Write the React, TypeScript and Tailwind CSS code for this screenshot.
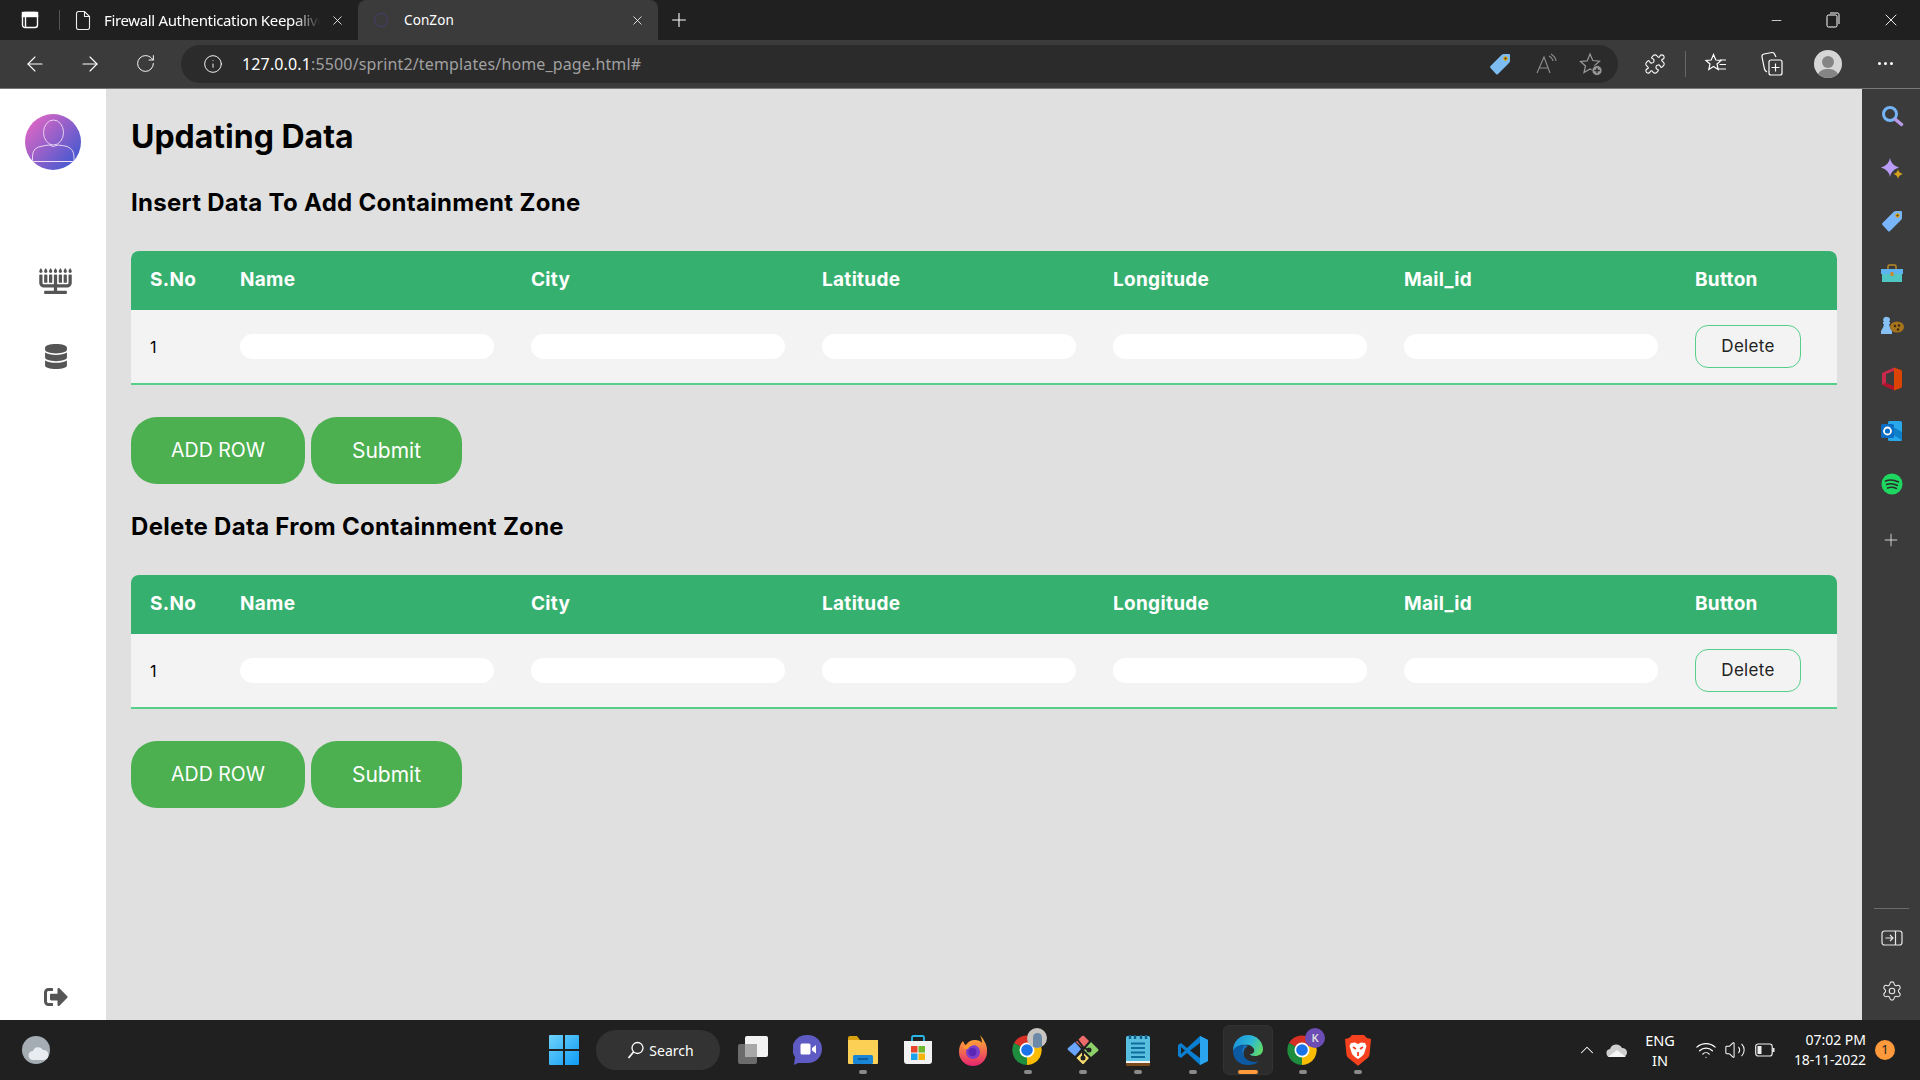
import React from "react";
import { FaMenorah, FaDatabase, FaSignOutAlt } from "react-icons/fa";
import {
  ArrowLeft, ArrowRight, RotateCw, Info, Plus, X, Minus, Puzzle, Settings, ChevronUp, Wifi, Volume2,
} from "lucide-react";

const ui = "font-['Noto_Sans','Open_Sans',sans-serif]";
const pop = "font-['Inter','Noto_Sans',sans-serif]";
const gridCols = "grid grid-cols-[90px_291px_291px_291px_291px_291px_1fr] pl-[19px] items-center";
const cols = ["S.No", "Name", "City", "Latitude", "Longitude", "Mail_id", "Button"];

function Field() {
  return <div className="w-[254px] h-[25px] rounded-full bg-white" />;
}

function DataBlock({ title, mt }: { title: string; mt: string }) {
  return (
    <section className={mt}>
      <h2 className={`${pop} text-[24px] leading-[36px] font-bold tracking-[0.3px] text-black`}>{title}</h2>
      <div className="mt-[30px]">
        <div className={`${gridCols} h-[59px] bg-[#36b06f] rounded-t-[8px] text-white text-[19px] font-bold tracking-[0.3px]`}>
          {cols.map((c) => (
            <div key={c}>{c}</div>
          ))}
        </div>
        <div className={`${gridCols} h-[75px] bg-[#f3f3f3] border-b-2 border-[#55cf8a] text-black`}>
          <div className="text-[16px]">1</div>
          <Field />
          <Field />
          <Field />
          <Field />
          <Field />
          <button className="w-[106px] h-[43px] rounded-[13px] border border-[#55cf8a] text-[17px] tracking-[0.3px] text-[#222]">Delete</button>
        </div>
      </div>
      <div className="flex gap-[6px] mt-[32px]">
        <button className="w-[174px] h-[67px] rounded-[26px] bg-[#4caf50] text-white text-[19.5px]">ADD ROW</button>
        <button className="w-[151px] h-[67px] rounded-[26px] bg-[#4caf50] text-white text-[21px]">Submit</button>
      </div>
    </section>
  );
}

function Tag({ c = "#7cbcf0" }: { c?: string }) {
  return (
    <svg width="24" height="24" viewBox="0 0 24 24">
      <path d="M2.5 14 L14 2.5 Q15 2 16 2 L21 2 Q22 2 22 3 L22 9 Q22 10 21 11 L10 22 Q9 23 8 22 L2.5 16 Q1.5 15 2.5 14Z" fill={c} />
      <circle cx="17.5" cy="6.5" r="2.2" fill="#e8a400" />
      <circle cx="17.5" cy="6.5" r="1" fill="#333" />
    </svg>
  );
}

function ToolBtn({ w, children }: { w: string; children: React.ReactNode }) {
  return <div className={`${w} flex items-center justify-center shrink-0`}>{children}</div>;
}

function TopBars() {
  return (
    <header className={`${ui} shrink-0`}>
      <div className="h-[40px] bg-[#202020] flex text-white">
        <div className="w-[60px] flex items-center justify-center relative shrink-0">
          <svg width="18" height="18" viewBox="0 0 18 18" fill="none" stroke="#fff" strokeWidth="1.4">
            <rect x="1.5" y="1.5" width="15" height="15" rx="2.5" />
            <rect x="1.5" y="1.5" width="15" height="4" fill="#fff" />
            <path d="M4.5 5.5v11" />
          </svg>
          <div className="absolute right-0 top-[10px] h-[20px] w-px bg-[#555]" />
        </div>
        <div className="w-[298px] flex items-center pl-[15px] shrink-0">
          <svg width="16" height="19" viewBox="0 0 16 19" fill="none" stroke="#eee" strokeWidth="1.1" className="shrink-0">
            <path d="M1.5 2.5a2 2 0 0 1 2-2h6l5 5v11a2 2 0 0 1-2 2h-9a2 2 0 0 1-2-2zM9.5.5v5h5" />
          </svg>
          <span className="ml-[13px] w-[216px] shrink-0 text-[15px] tracking-[-0.35px] whitespace-nowrap overflow-hidden [mask-image:linear-gradient(to_right,black_88%,transparent)]">
            Firewall Authentication Keepalive
          </span>
          <X size={15} strokeWidth={1.3} className="ml-[10px] shrink-0" />
        </div>
        <div className="w-[300px] bg-[#3b3b3b] rounded-t-[8px] flex items-center shrink-0">
          <div className="w-[46px] flex justify-center">
            <div className="w-[14px] h-[14px] rounded-full border border-[#4a3a70]" />
          </div>
          <span className="text-[13.5px] tracking-[0.1px]">ConZon</span>
          <X size={15} strokeWidth={1.3} className="ml-auto mr-[13px]" />
        </div>
        <div className="w-[42px] flex items-center justify-center">
          <Plus size={22} strokeWidth={1.2} />
        </div>
        <div className="ml-auto flex items-center h-full">
          <ToolBtn w="w-[57px] pl-[2px]"><Minus size={15} strokeWidth={1.2} /></ToolBtn>
          <ToolBtn w="w-[58px]">
            <svg width="14" height="16" viewBox="0 0 14 16" fill="none" stroke="#fff" strokeWidth="1">
              <rect x="1" y="3" width="10" height="12" rx="1.5" />
              <path d="M4 1h7.5A1.5 1.5 0 0 1 13 2.5V12" />
            </svg>
          </ToolBtn>
          <ToolBtn w="w-[58px]"><X size={20} strokeWidth={1.1} /></ToolBtn>
        </div>
      </div>
      <div className="h-[49px] bg-[#3b3b3b] border-b border-[#777] flex items-center text-white pb-px">
        <ToolBtn w="w-[68px] pl-[1px]"><ArrowLeft size={24} strokeWidth={1.1} /></ToolBtn>
        <ToolBtn w="w-[43px]"><ArrowRight size={24} strokeWidth={1.1} /></ToolBtn>
        <ToolBtn w="w-[68px]"><RotateCw size={21} strokeWidth={1.1} /></ToolBtn>
        <div className="ml-[2px] w-[1437px] h-[38px] rounded-full bg-[#2b2b2b] flex items-center shrink-0">
          <Info size={20} strokeWidth={1.1} className="ml-[22px]" />
          <span className="ml-[19px] text-[16px] tracking-[0.14px] whitespace-nowrap">
            127.0.0.1<span className="text-[#a0a0a0]">:5500/sprint2/templates/home_page.html#</span>
          </span>
          <div className="ml-auto flex items-center pr-[5px]">
            <ToolBtn w="w-[46px]"><Tag /></ToolBtn>
            <ToolBtn w="w-[46px]">
              <svg width="24" height="24" viewBox="0 0 24 24" fill="none" stroke="#8e8e8e" strokeWidth="1.1">
                <path d="M3 21 L10 5 L16 21 M5.5 16h9M15 4a7 7 0 0 1 4 5M17 2a10 10 0 0 1 5 7" />
              </svg>
            </ToolBtn>
            <ToolBtn w="w-[44px]">
              <svg width="24" height="24" viewBox="0 0 24 24" fill="none" stroke="#9a9a9a" strokeWidth="1.2">
                <path d="M11 2l2.8 6.5 6.7.6-5 4.5 1.5 6.5L11 17l-6 3.500 1.500-6.500-5-4.500 6.700-.6z" />
                <circle cx="18" cy="18.500" r="5" fill="#9a9a9a" stroke="#2b2b2b" strokeWidth="0.8" />
                <path d="M18 15.800v5.400M15.300 18.500h5.400" stroke="#2b2b2b" strokeWidth="1.300" />
              </svg>
            </ToolBtn>
          </div>
        </div>
        <ToolBtn w="w-[74px]"><Puzzle size={22} strokeWidth={1.2} /></ToolBtn>
        <div className="h-[26px] w-px bg-[#666] -ml-[7px] mr-[7px]" />
        <ToolBtn w="w-[60px] -ml-[7px]">
          <svg width="24" height="24" viewBox="0 0 24 24" fill="none" stroke="#fff" strokeWidth="1.2">
            <path d="M9.500 2.500l2.300 5.500 5.200.500-4 3.500 1.200 5.500-4.700-3-4.700 3L6 12 2 8.500l5.200-.500zM16 8h6M15.500 12.500H22M14 17h8" />
          </svg>
        </ToolBtn>
        <ToolBtn w="w-[51px]">
          <svg width="24" height="26" viewBox="0 0 24 26" fill="none" stroke="#fff" strokeWidth="1.2">
            <rect x="9" y="9" width="13" height="15" rx="2" />
            <path d="M15.500 12.500v8M11.500 16.500h8M7 21 Q5 20 4.500 18 L2 6 Q1.600 3.500 4 3 L12 1.500 Q14 1.300 14.800 3.500 L16 6" />
          </svg>
        </ToolBtn>
        <ToolBtn w="w-[62px]">
          <div className="w-[28px] h-[28px] rounded-full bg-[#d6d6d6] flex flex-col items-center justify-end overflow-hidden">
            <div className="w-[12px] h-[12px] rounded-full bg-[#858585] mb-[1px]" />
            <div className="w-[22px] h-[9px] rounded-t-full bg-[#858585]" />
          </div>
        </ToolBtn>
        <ToolBtn w="w-[52px]">
          <div className="flex gap-[3px]">
            <div className="w-[3px] h-[3px] rounded-full bg-white" />
            <div className="w-[3px] h-[3px] rounded-full bg-white" />
            <div className="w-[3px] h-[3px] rounded-full bg-white" />
          </div>
        </ToolBtn>
      </div>
    </header>
  );
}

function LeftBar() {
  return (
    <aside className="w-[106px] shrink-0 bg-white flex flex-col items-center text-[#555]">
      <svg width="56" height="56" viewBox="0 0 56 56" className="mt-[25px]">
        <defs>
          <linearGradient id="av" x1="0.1" y1="0.1" x2="0.9" y2="0.8">
            <stop offset="0" stopColor="#de66c4" />
            <stop offset="1" stopColor="#4a5ad0" />
          </linearGradient>
          <clipPath id="avc"><circle cx="28" cy="28" r="28" /></clipPath>
        </defs>
        <circle cx="28" cy="28" r="28" fill="url(#av)" />
        <g clipPath="url(#avc)" fill="none" stroke="#f0dff5" strokeWidth="0.9">
          <ellipse cx="28.500" cy="18.500" rx="10" ry="12.500" />
          <path d="M7.500 47.500 V42 Q7.500 33 18 32 Q23 31 24 31 Q28 34 33 31 Q38 31.500 42 32.500 Q49 35 49 43 V47.500" />
          <path d="M7 47.500h42.500" strokeWidth="1.200" />
        </g>
      </svg>
      <FaMenorah className="mt-[98px] w-[33px] h-[26px] ml-[5px]" />
      <FaDatabase className="mt-[50px] w-[22px] h-[25px] ml-[5px]" />
      <FaSignOutAlt className="mt-auto mb-[11px] w-[24px] h-[24px] ml-[5px]" />
    </aside>
  );
}

function Main() {
  return (
    <main className={`${pop} flex-1 bg-[#e0e0e0] px-[25px] pt-[24px]`}>
      <h1 className="text-[32px] leading-[48px] font-bold tracking-[0px] text-black">Updating Data</h1>
      <DataBlock title="Insert Data To Add Containment Zone" mt="mt-[24px]" />
      <DataBlock title="Delete Data From Containment Zone" mt="mt-[25px]" />
    </main>
  );
}

function Slot({ children, h = "h-[52.5px]" }: { children: React.ReactNode; h?: string }) {
  return <div className={`${h} flex items-center justify-center`}>{children}</div>;
}

function RightBar() {
  return (
    <aside className="w-[58px] shrink-0 bg-[#3b3b3b] flex flex-col justify-between pt-[1px] pb-[3px] pl-[1px]">
      <div>
        <Slot>
          <svg width="24" height="24" viewBox="0 0 24 24" fill="none">
            <circle cx="10" cy="10" r="6.500" stroke="#72b4f5" strokeWidth="3" />
            <path d="M15.500 15.500l6 5" stroke="#b99ae8" strokeWidth="3.500" strokeLinecap="round" />
          </svg>
        </Slot>
        <Slot>
          <svg width="24" height="24" viewBox="0 0 24 24">
            <path d="M10 1 Q11 8 19 10.500 Q11 13 10 20 Q9 13 1 10.500 Q9 8 10 1Z" fill="#b89cf5" />
            <path d="M18 12 Q18.500 16 23 17 Q18.500 18 18 22 Q17.500 18 13.500 17 Q17.500 16 18 12Z" fill="#d9a21e" />
          </svg>
        </Slot>
        <Slot><Tag c="#79b5fa" /></Slot>
        <Slot>
          <svg width="24" height="24" viewBox="0 0 24 24">
            <path d="M8 7V4.500Q8 3 9.500 3h5Q16 3 16 4.500V7" fill="none" stroke="#b98a28" strokeWidth="1.500" />
            <path d="M1 7h22v5H1z" fill="#5db3f0" />
            <path d="M2 12h20v8H2z" fill="#4fc6c2" />
            <rect x="10.500" y="10" width="3" height="4" fill="#c98a2a" />
          </svg>
        </Slot>
        <Slot>
          <svg width="24" height="24" viewBox="0 0 24 24">
            <path d="M7 3a3 3 0 0 1 3 3 3 3 0 0 1-1 2h1v2H9q0 3 3 7v3H1v-3q3-4 3-7H3V8h1a3 3 0 0 1 3-5z" fill="#86c0f5" />
            <ellipse cx="17" cy="13" rx="7" ry="5.500" fill="#a6741c" />
            <circle cx="15" cy="12" r="1.200" fill="#3a2a10" />
            <circle cx="19" cy="11.500" r="1.200" fill="#3a2a10" />
            <circle cx="18" cy="15.500" r="1.200" fill="#3a2a10" />
          </svg>
        </Slot>
        <Slot>
          <svg width="24" height="24" viewBox="0 0 24 24">
            <path d="M2 6 L14 0.500 V4 L6 7 V16 L2 18Z" fill="#c8284a" />
            <path d="M14 .500 L21 3 Q22 3.500 22 5 V19 Q22 20.500 21 21 L14 23.500 V.500Z" fill="#dc4405" />
            <path d="M2 18 L6 16 L14 19 V23.500Z" fill="#b3142c" />
          </svg>
        </Slot>
        <Slot>
          <svg width="24" height="24" viewBox="0 0 24 24">
            <rect x="8" y="2" width="14" height="20" rx="1.500" fill="#28a8ea" />
            <path d="M8 13 L22 21 V13 L15 9Z" fill="#0f7fc9" />
            <rect x="1" y="5" width="13" height="14" rx="1.500" fill="#0b6cc4" />
            <circle cx="7.500" cy="12" r="3.500" fill="none" stroke="#fff" strokeWidth="1.800" />
          </svg>
        </Slot>
        <Slot>
          <svg width="24" height="24" viewBox="0 0 24 24" fill="none">
            <circle cx="12" cy="12" r="10.500" fill="#1ed760" />
            <path d="M5.500 9Q12 6.800 18.500 10M6.500 12.500Q12 10.800 17.500 13.500M7.500 16Q12 14.500 16.500 16.500" stroke="#2b2b2b" strokeWidth="1.500" strokeLinecap="round" />
          </svg>
        </Slot>
        <div className="mt-[4px]">
          <Slot><Plus size={20} strokeWidth={1.1} color="#dddddd" className="-ml-[2px]" /></Slot>
        </div>
      </div>
      <div>
        <div className="mx-auto w-[35px] h-px bg-[#6b6b6b] mb-[2px]" />
        <Slot h="h-[53px]">
          <svg width="22" height="18" viewBox="0 0 22 18" fill="none" stroke="#e8e8e8" strokeWidth="1.200">
            <rect x="1" y="2" width="20" height="14" rx="2.500" />
            <path d="M14.500 2v14M4.500 9h7M9 6l3 3-3 3" />
          </svg>
        </Slot>
        <Slot h="h-[53px]">
          <Settings size={22} strokeWidth={1.200} color="#e8e8e8" />
        </Slot>
      </div>
    </aside>
  );
}

function TaskSlot({ children, dot }: { children: React.ReactNode; dot?: boolean }) {
  return (
    <div className="w-[55px] h-[50px] flex flex-col items-center justify-center relative shrink-0">
      {children}
      {dot && <div className="absolute bottom-[1px] w-[8px] h-[4px] rounded-full bg-[#8a8a8a]" />}
    </div>
  );
}

function ChromeIcon({ badge }: { badge: React.ReactNode }) {
  return (
    <div className="relative w-[30px] h-[30px] -ml-[2px]">
      <svg width="30" height="30" viewBox="0 0 30 30">
        <path d="M15 15 L28 8 A15 15 0 0 0 2 8Z" fill="#d93025" />
        <path d="M15 15 L2 8 A15 15 0 0 0 15 30Z" fill="#1e8e3e" />
        <path d="M15 15 L15 30 A15 15 0 0 0 28 8Z" fill="#fbbc04" />
        <circle cx="15" cy="15" r="7.500" fill="#fff" />
        <circle cx="15" cy="15" r="5.800" fill="#1a73e8" />
      </svg>
      {badge}
    </div>
  );
}

function Taskbar() {
  return (
    <footer className={`${ui} h-[60px] shrink-0 bg-[#202020] grid grid-cols-[1fr_auto_1fr] items-center text-white`}>
      <div className="pl-[22px]">
        <svg width="28" height="28" viewBox="0 0 28 28">
          <circle cx="14" cy="14" r="14" fill="#a4acb4" />
          <path d="M11 24a4.500 4.500 0 0 1 0-9 5.500 5.500 0 0 1 10-1 5 5 0 0 1 1 10z" fill="#e8ecf0" />
        </svg>
      </div>
      <div className="flex items-center pb-[5px] pt-[5px] ml-[2px]">
        <TaskSlot>
          <svg width="30" height="30" viewBox="0 0 30 30">
            <defs>
              <linearGradient id="win" x1="0" y1="0" x2="1" y2="1">
                <stop offset="0" stopColor="#6fd3fb" />
                <stop offset="1" stopColor="#0f9bf5" />
              </linearGradient>
            </defs>
            <path d="M0 1a1 1 0 0 1 1-1h13v14H0zM16 0h13a1 1 0 0 1 1 1v13H16zM0 16h14v14H1a1 1 0 0 1-1-1zM16 16h14v13a1 1 0 0 1-1 1H16z" fill="url(#win)" />
          </svg>
        </TaskSlot>
        <div className="ml-[4px] mr-[6px] w-[124px] h-[40px] rounded-full bg-[#333333] flex items-center justify-center gap-[4px] pl-[6px] text-[14px] shrink-0">
          <svg width="18" height="18" viewBox="0 0 18 18" fill="none" stroke="#fff" strokeWidth="1.300">
            <circle cx="10.500" cy="7" r="5.500" />
            <path d="M6.500 11 L1.500 17" strokeWidth="1.800" />
          </svg>
          Search
        </div>
        <TaskSlot>
          <svg width="30" height="28" viewBox="0 0 30 28">
            <rect x="0" y="8" width="19" height="20" rx="2" fill="#6b6b6b" />
            <rect x="7" y="0" width="23" height="21" rx="2" fill="#f2f2f2" />
            <rect x="7" y="8" width="12" height="13" fill="#a8a8a8" />
          </svg>
        </TaskSlot>
        <TaskSlot>
          <svg width="30" height="32" viewBox="0 0 30 32">
            <path d="M15 1a14 14 0 0 1 0 28 L5 29 L1 31 L2 23 A14 14 0 0 1 15 1Z" fill="#5e5bc4" />
            <rect x="7.500" y="9.500" width="10" height="11" rx="1.500" fill="#fff" />
            <path d="M19 14 L23 11 V19.500 L19 16.500Z" fill="#fff" />
          </svg>
        </TaskSlot>
        <TaskSlot dot>
          <svg width="30" height="28" viewBox="0 0 30 28">
            <path d="M0 2a2 2 0 0 1 2-2h7l3 4H0z" fill="#d9a010" />
            <path d="M0 4h30v23a1 1 0 0 1-1 1H1a1 1 0 0 1-1-1z" fill="#fcd054" />
            <rect x="5" y="19" width="20" height="9" rx="1.500" fill="#1a86d6" />
            <path d="M10 23h10" stroke="#0a4f8c" strokeWidth="1.500" />
          </svg>
        </TaskSlot>
        <TaskSlot>
          <svg width="30" height="30" viewBox="0 0 30 30">
            <path d="M9 6V2.500Q9 1 10.500 1h9Q21 1 21 2.500V6" fill="none" stroke="#2ab8e8" strokeWidth="1.800" />
            <path d="M1 6h28v20a3 3 0 0 1-3 3H4a3 3 0 0 1-3-3z" fill="#f2f2f2" />
            <rect x="8" y="11" width="6.500" height="6.500" fill="#e8452c" />
            <rect x="15.500" y="11" width="6.500" height="6.500" fill="#6db82e" />
            <rect x="8" y="18.500" width="6.500" height="6.500" fill="#1da1e8" />
            <rect x="15.500" y="18.500" width="6.500" height="6.500" fill="#f5b50c" />
          </svg>
        </TaskSlot>
        <TaskSlot>
          <svg width="30" height="32" viewBox="0 0 30 32">
            <defs>
              <linearGradient id="ff" x1="0.5" y1="0" x2="0.5" y2="1">
                <stop offset="0" stopColor="#ffb92e" />
                <stop offset="1" stopColor="#e6236f" />
              </linearGradient>
            </defs>
            <path d="M22 1 Q30 10 29 18 A14 14 0 0 1 1 18 Q1 11 5 7 Q6 10 8 11 Q11 6 17 6 Q22 6 24 9 Q24 5 22 1Z" fill="url(#ff)" />
            <circle cx="15" cy="18" r="7" fill="#7a3ec8" />
            <circle cx="14.500" cy="18" r="4" fill="#5b25b5" />
            <path d="M5 14 Q9 9 16 11 Q11 12 10 15 Q7 15 5 14Z" fill="#ff9a2e" />
          </svg>
        </TaskSlot>
        <TaskSlot dot>
          <ChromeIcon
            badge={
              <div className="absolute -right-[5px] -top-[7px] w-[20px] h-[20px] rounded-full bg-[#c8c4c0] flex justify-center items-end overflow-hidden">
                <div className="w-[9px] h-[15px] rounded-t-full bg-[#6c8aa8]" />
              </div>
            }
          />
        </TaskSlot>
        <TaskSlot dot>
          <svg width="32" height="32" viewBox="0 0 32 32">
            <path d="M16 14 L9 8 L15 2 Q16 1.500 17 2 L22 7Z" fill="#ef6b6b" />
            <path d="M8 8 L14 15 L8 22 L1 16 Q0 15 1 14Z" fill="#6aa6ff" />
            <path d="M24 8 L31 15 Q32 16 31 17 L24 23 L17 16Z" fill="#8dd16a" />
            <path d="M15.500 18 L22 24 L17 29.500 Q16 30.500 15 29.500 L9.500 24Z" fill="#f7dc6f" />
            <path d="M10 5 L16 13 V23M16 13 L21 16" stroke="#222" strokeWidth="2" fill="none" />
            <circle cx="16" cy="24" r="2.500" fill="#222" />
            <circle cx="22" cy="16" r="2.500" fill="#222" />
          </svg>
        </TaskSlot>
        <TaskSlot dot>
          <svg width="24" height="32" viewBox="0 0 24 32">
            <rect x="0" y="2" width="24" height="28" rx="1.500" fill="#58bfe0" />
            <path d="M0 28h24v3a1 1 0 0 1-1 1H1a1 1 0 0 1-1-1z" fill="#7a4a1e" />
            <path d="M0 27h24v2H0z" fill="#f2f2f2" />
            <path d="M5 9.500h14M5 14h14M5 18.500h14M5 23h14" stroke="#106e9c" strokeWidth="2" />
            <path d="M4 1v4M9 1v4M15 1v4M20 1v4" stroke="#0f5f88" strokeWidth="2.400" />
          </svg>
        </TaskSlot>
        <TaskSlot dot>
          <svg width="31" height="31" viewBox="0 0 31 31">
            <path d="M22 1 L30 5 V26 L22 30 L9 18 L3 23 L0 21 V10 L3 8 L9 13Z" fill="#0a7fd1" />
            <path d="M22 1 L30 5 V26 L22 30Z" fill="#2ba4ef" />
            <path d="M22 8 L12 15.500 L22 23Z" fill="#202020" />
            <path d="M3 12 L7 15.500 L3 19Z" fill="#202020" />
          </svg>
        </TaskSlot>
        <div className="w-[55px] h-[50px] relative shrink-0 flex justify-center">
          <div className="w-[50px] h-[50px] rounded-[6px] bg-[#2c2c2c] border border-[#333] flex items-center justify-center">
            <svg width="32" height="32" viewBox="0 0 32 32">
              <defs>
                <linearGradient id="ed" x1="0" y1="0.2" x2="1" y2="0.6">
                  <stop offset="0" stopColor="#1b8fd8" />
                  <stop offset="0.55" stopColor="#2bb6d8" />
                  <stop offset="1" stopColor="#5fd96c" />
                </linearGradient>
              </defs>
              <path d="M1 17 C1 7 8 1 16 1 C25 1 31 8 31 15 C31 20 27 22 23 22 C20 22 18 21 18 20 C21 20 23 18 22 15 C20 11 16 10 12 11 C6 12 2 15 1 17Z" fill="url(#ed)" />
              <path d="M1 17 C3 12 9 10 13 11 C9 14 9 20 13 24 C17 28 23 29 27 27 C24 30 20 31 16 31 C7 31 1 25 1 17Z" fill="#0c59a4" />
              <path d="M13 11 C9 14 9 20 13 24 C10 19 12 14 16 12 Z" fill="#1673c4" />
            </svg>
          </div>
          <div className="absolute bottom-[1px] w-[20px] h-[4px] rounded-full bg-[#ff9a3c]" />
        </div>
        <TaskSlot dot>
          <ChromeIcon
            badge={
              <div className="absolute -right-[8px] -top-[7px] w-[20px] h-[20px] rounded-full bg-[#6b4db5] flex items-center justify-center text-[11px] font-semibold text-[#ddd]">
                K
              </div>
            }
          />
        </TaskSlot>
        <TaskSlot dot>
          <svg width="26" height="31" viewBox="0 0 26 31">
            <path d="M7 0H19L22 3L26 4 L24.500 20 Q24 22 22 23.500 L14 30 Q13 31 12 30 L4 23.500 Q2 22 1.500 20 L0 4 L4 3Z" fill="#f5411e" />
            <path d="M6 8 L10 7.500 L13 9 L16 7.500 L20 8 L21.500 11 L19 19 L16 22 L13 24 L10 22 L7 19 L4.500 11Z" fill="#fff" />
            <path d="M8 12 L11 14 M18 12 L15 14 M13 17 V21" stroke="#f5411e" strokeWidth="1.800" />
          </svg>
        </TaskSlot>
      </div>
      <div className="flex items-center justify-end pr-[25px]">
        <ChevronUp size={22} strokeWidth={1.1} />
        <svg width="22" height="14" viewBox="0 0 22 14" className="ml-[8px]">
          <path d="M5 14a4 4 0 0 1-1-8 6.500 6.500 0 0 1 12-1 4.500 4.500 0 0 1 1 9z" fill="#cfcfcf" />
          <path d="M2 14 L11 7 L20 14Z" fill="#f5f5f5" />
        </svg>
        <div className="w-[60px] ml-[2px] text-[14.5px] leading-[20px] text-center">
          <div>ENG</div>
          <div>IN</div>
        </div>
        <Wifi size={22} strokeWidth={1.3} className="ml-[5px]" />
        <Volume2 size={22} strokeWidth={1.1} className="ml-[7px]" />
        <svg width="20" height="14" viewBox="0 0 20 14" fill="none" className="ml-[9px]">
          <rect x="0.700" y="1" width="16.500" height="12" rx="2.500" stroke="#eee" strokeWidth="1.200" />
          <rect x="2.500" y="3" width="4" height="8" fill="#eee" />
          <path d="M18.500 5v4" stroke="#eee" strokeWidth="2" />
        </svg>
        <div className="w-[80px] ml-[11px] text-[14px] leading-[20px] text-right whitespace-nowrap">
          <div>07:02 PM</div>
          <div className="tracking-[-0.1px]">18-11-2022</div>
        </div>
        <div className="ml-[9px] w-[20px] h-[20px] rounded-full bg-[#ff9a3c] flex items-center justify-center text-[13px] text-[#222] shrink-0">1</div>
      </div>
    </footer>
  );
}

export default function App() {
  return (
    <div className="w-[1920px] h-[1080px] flex flex-col overflow-hidden">
      <TopBars />
      <div className="flex-1 flex min-h-0">
        <LeftBar />
        <Main />
        <RightBar />
      </div>
      <Taskbar />
    </div>
  );
}
